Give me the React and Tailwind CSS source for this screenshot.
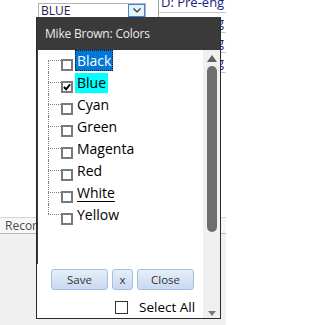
import React from "react";

const items = ["Black", "Blue", "Cyan", "Green", "Magenta", "Red", "White", "Yellow"];

function Row({ label, i }) {
  const last = i === items.length - 1;
  return (
    <div className="flex h-[22px] items-start">
      <div className="ml-[10px] flex h-full w-[13px] flex-col">
        <div className={i === 0 ? "h-[10px]" : "h-[10px] border-l border-dotted border-[#808080]"} />
        <div
          className={
            last
              ? "h-[1px] border-t border-dotted border-[#808080]"
              : "flex-1 border-t border-l border-dotted border-[#808080]"
          }
        />
      </div>
      <div className="mt-[9px] flex h-[12px] w-[12px] items-center justify-center border-2 border-[#7a7a7a] bg-white">
        {label === "Blue" && (
          <svg width="9" height="8" viewBox="0 0 9 8">
            <path d="M1 4 L3.5 6.5 L8 1" stroke="#000" strokeWidth="2.2" fill="none" />
          </svg>
        )}
      </div>
      {label === "Black" ? (
        <span className="ml-[2px] h-[21px] border border-dotted border-[#1a1a1a] bg-[#0078d7] px-[1px] text-[14px] leading-[19px] text-white">
          Black
        </span>
      ) : label === "Blue" ? (
        <span className="ml-[2px] mt-[1px] h-[20px] bg-[#00ffff] px-[2px] text-[14px] leading-[19px] text-black">
          Blue
        </span>
      ) : label === "White" ? (
        <span className="ml-[2px] mt-[1px] h-[20px] px-[2px] text-[14px] leading-[19px] text-black underline underline-offset-[3px]">
          White
        </span>
      ) : (
        <span className="ml-[2px] mt-[1px] h-[20px] px-[2px] text-[14px] leading-[19px] text-black">{label}</span>
      )}
    </div>
  );
}

function Btn({ children, w }) {
  return (
    <div
      className={`flex h-[21px] items-center justify-center rounded-[3px] border border-[#a3bfe3] bg-linear-to-b from-[#e6eefa] to-[#c8d9f0] text-[11.5px] text-[#333] ${w}`}
    >
      {children}
    </div>
  );
}

export default function App() {
  return (
    <div className="relative h-[325px] w-[226px] overflow-hidden bg-[#f0f0f0] font-['Open_Sans',sans-serif]">
      {/* page behind */}
      <div className="flex h-[217px] bg-white">
        <div className="w-[158px] shrink-0">
          <div className="ml-[38px] mt-[3px] flex h-[15px] w-[108px] border border-[#b4b4b4] bg-white">
            <span className="flex-1 pl-[2px] text-[12px] leading-[14px] text-[#1c1c4a]">BLUE</span>
            <div className="flex w-[17px] items-center justify-center border border-[#3d86d6] bg-[#e5f1fb]">
              <svg width="8" height="5" viewBox="0 0 8 5">
                <path d="M0.5 0.5 L4 4 L7.5 0.5" stroke="#333" strokeWidth="1.2" fill="none" />
              </svg>
            </div>
          </div>
        </div>
        <div className="-mt-[7px] flex min-w-0 flex-1 flex-col overflow-hidden border-l border-[#a0a0a0]">
          {[0, 1, 2, 3].map((k) => (
            <div
              key={k}
              className="h-[20px] overflow-hidden whitespace-nowrap border-b border-[#c8c8c8] pl-[2px] text-[13px] leading-[19px] text-[#1a237e]"
            >
              D: Pre-eng
            </div>
          ))}
        </div>
      </div>
      <div className="flex h-[17px] items-center overflow-hidden whitespace-nowrap border-y border-t-[#d4d4d4] border-b-[#b8b8b8] bg-[#f7f7f7] pl-[5px] text-[12px] text-[#4a4a4a]">
        Record
      </div>

      {/* popup */}
      <div className="absolute left-[36px] top-[17px] w-[185px] border-x border-b border-[#2b2b2b] bg-white">
        <div className="flex h-[33px] items-center bg-[#3a3a3a] pl-[8px] text-[12px] tracking-[-0.2px] text-[#ececec]">
          Mike Brown: Colors
        </div>
        <div className="flex h-[268px]">
          <div className="flex w-[166px] flex-col">
            <div className="h-[214px] border-l border-[#3a3a3a]">
              {items.map((it, i) => (
                <Row key={it} label={it} i={i} />
              ))}
            </div>
            <div className="ml-[14px] mt-[5px] flex gap-[4px]">
              <Btn w="w-[57px]">Save</Btn>
              <Btn w="w-[21px]">x</Btn>
              <Btn w="w-[57px]">Close</Btn>
            </div>
            <div className="ml-[78px] mt-[9px] flex items-center gap-[11px]">
              <div className="h-[13px] w-[13px] border border-[#333] bg-white" />
              <span className="text-[13.5px] leading-[16px] text-black">Select All</span>
            </div>
          </div>
          <div className="flex w-[17px] flex-col bg-[#f0f0f0]">
            <div className="flex h-[16px] items-center justify-center">
              <svg width="10" height="7" viewBox="0 0 10 7">
                <polygon points="5,0 10,7 0,7" fill="#606060" />
              </svg>
            </div>
            <div className="mx-auto h-[166px] w-[10px] rounded-full bg-[#6e6e6e]" />
            <div className="flex-1" />
            <div className="mb-[2px] flex h-[6px] items-center justify-center">
              <svg width="8" height="5" viewBox="0 0 8 5">
                <polygon points="0,0 8,0 4,5" fill="#7a7a7a" />
              </svg>
            </div>
          </div>
        </div>
      </div>
    </div>
  );
}
